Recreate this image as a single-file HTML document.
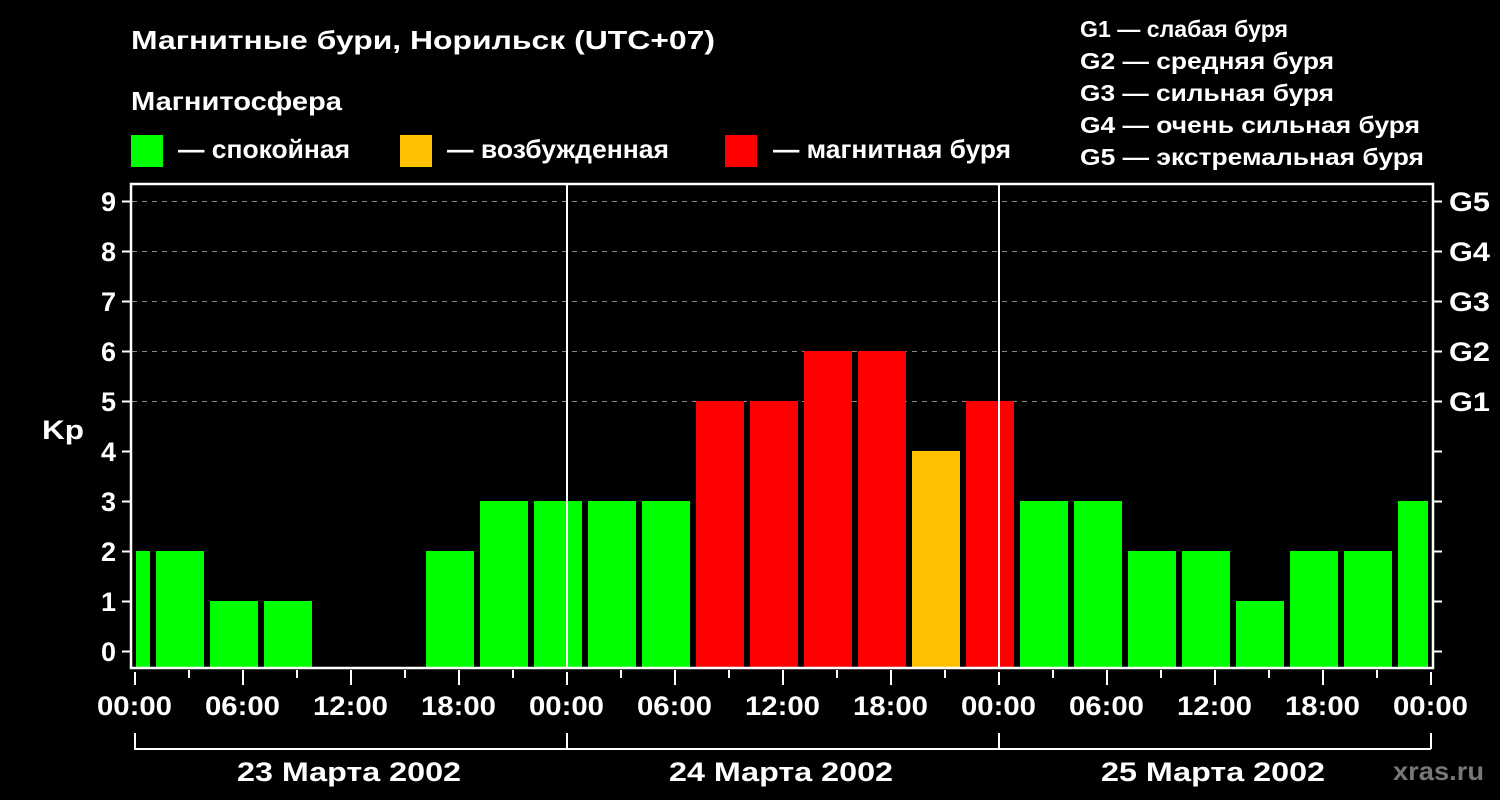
<!DOCTYPE html>
<html><head><meta charset="utf-8"><style>
html,body{margin:0;padding:0;background:#000;}
svg{display:block;font-family:"Liberation Sans",sans-serif;font-weight:bold;}
</style></head><body>
<svg width="1500" height="800" viewBox="0 0 1500 800" xmlns="http://www.w3.org/2000/svg">
<rect width="1500" height="800" fill="#000"/>
<g fill="#fff" font-size="26">
<text x="131" y="49" textLength="584" lengthAdjust="spacingAndGlyphs">Магнитные бури, Норильск (UTC+07)</text>
<text x="131" y="110" textLength="211" lengthAdjust="spacingAndGlyphs">Магнитосфера</text>
<text x="178" y="158" textLength="172" lengthAdjust="spacingAndGlyphs">— спокойная</text>
<text x="447" y="158" textLength="222" lengthAdjust="spacingAndGlyphs">— возбужденная</text>
<text x="773" y="158" textLength="238" lengthAdjust="spacingAndGlyphs">— магнитная буря</text>
</g>
<rect x="131" y="135" width="32" height="32" fill="#00ff00"/>
<rect x="400" y="135" width="32" height="32" fill="#ffc000"/>
<rect x="725" y="135" width="32" height="32" fill="#ff0000"/>
<g fill="#fff" font-size="23" lengthAdjust="spacingAndGlyphs">
<text x="1080" y="37" textLength="208" lengthAdjust="spacingAndGlyphs">G1 — слабая буря</text>
<text x="1080" y="69" textLength="254" lengthAdjust="spacingAndGlyphs">G2 — средняя буря</text>
<text x="1080" y="101" textLength="254" lengthAdjust="spacingAndGlyphs">G3 — сильная буря</text>
<text x="1080" y="133" textLength="340" lengthAdjust="spacingAndGlyphs">G4 — очень сильная буря</text>
<text x="1080" y="165" textLength="344" lengthAdjust="spacingAndGlyphs">G5 — экстремальная буря</text>
</g>
<g stroke="#888" stroke-width="1" stroke-dasharray="5,5">
<line x1="132" y1="201.5" x2="1432" y2="201.5"/>
<line x1="132" y1="251.5" x2="1432" y2="251.5"/>
<line x1="132" y1="301.5" x2="1432" y2="301.5"/>
<line x1="132" y1="351.5" x2="1432" y2="351.5"/>
<line x1="132" y1="401.5" x2="1432" y2="401.5"/>
</g>
<g>
<rect x="136" y="551" width="14" height="117" fill="#00ff00"/>
<rect x="156" y="551" width="48" height="117" fill="#00ff00"/>
<rect x="210" y="601" width="48" height="67" fill="#00ff00"/>
<rect x="264" y="601" width="48" height="67" fill="#00ff00"/>
<rect x="426" y="551" width="48" height="117" fill="#00ff00"/>
<rect x="480" y="501" width="48" height="167" fill="#00ff00"/>
<rect x="534" y="501" width="48" height="167" fill="#00ff00"/>
<rect x="588" y="501" width="48" height="167" fill="#00ff00"/>
<rect x="642" y="501" width="48" height="167" fill="#00ff00"/>
<rect x="696" y="401" width="48" height="267" fill="#ff0000"/>
<rect x="750" y="401" width="48" height="267" fill="#ff0000"/>
<rect x="804" y="351" width="48" height="317" fill="#ff0000"/>
<rect x="858" y="351" width="48" height="317" fill="#ff0000"/>
<rect x="912" y="451" width="48" height="217" fill="#ffc000"/>
<rect x="966" y="401" width="48" height="267" fill="#ff0000"/>
<rect x="1020" y="501" width="48" height="167" fill="#00ff00"/>
<rect x="1074" y="501" width="48" height="167" fill="#00ff00"/>
<rect x="1128" y="551" width="48" height="117" fill="#00ff00"/>
<rect x="1182" y="551" width="48" height="117" fill="#00ff00"/>
<rect x="1236" y="601" width="48" height="67" fill="#00ff00"/>
<rect x="1290" y="551" width="48" height="117" fill="#00ff00"/>
<rect x="1344" y="551" width="48" height="117" fill="#00ff00"/>
<rect x="1398" y="501" width="30" height="167" fill="#00ff00"/>
</g>
<g stroke="#fff" stroke-width="2">
<line x1="567" y1="183" x2="567" y2="668"/>
<line x1="999" y1="183" x2="999" y2="668"/>
</g>
<rect x="131" y="184" width="1302" height="484" fill="none" stroke="#fff" stroke-width="2.5"/>
<g stroke="#fff" stroke-width="2">
<path d="M122 201.5H131M122 251.5H131M122 301.5H131M122 351.5H131M122 401.5H131M122 451.5H131M122 501.5H131M122 551.5H131M122 601.5H131M122 651.5H131"/>
<path d="M1433 201.5H1442M1433 251.5H1442M1433 301.5H1442M1433 351.5H1442M1433 401.5H1442M1433 451.5H1442M1433 501.5H1442M1433 551.5H1442M1433 601.5H1442M1433 651.5H1442"/>
</g>
<g fill="#fff" font-size="27" text-anchor="end">
<text x="116" y="211">9</text><text x="116" y="261">8</text><text x="116" y="311">7</text>
<text x="116" y="361">6</text><text x="116" y="411">5</text><text x="116" y="461">4</text>
<text x="116" y="511">3</text><text x="116" y="561">2</text><text x="116" y="611">1</text>
<text x="116" y="661">0</text>
</g>
<text x="42" y="439" fill="#fff" font-size="27" textLength="42" lengthAdjust="spacingAndGlyphs">Kp</text>
<g fill="#fff" font-size="27">
<text x="1449" y="211" textLength="41" lengthAdjust="spacingAndGlyphs">G5</text>
<text x="1449" y="261" textLength="41" lengthAdjust="spacingAndGlyphs">G4</text>
<text x="1449" y="311" textLength="41" lengthAdjust="spacingAndGlyphs">G3</text>
<text x="1449" y="361" textLength="41" lengthAdjust="spacingAndGlyphs">G2</text>
<text x="1449" y="411" textLength="41" lengthAdjust="spacingAndGlyphs">G1</text>
</g>
<g stroke="#fff" stroke-width="2">
<path d="M135 672V685M567 672V685M999 672V685M1431 672V685"/>
<path d="M243 670V685M351 670V685M459 670V685M675 670V685M783 670V685M891 670V685M1107 670V685M1215 670V685M1323 670V685"/>
<path d="M189 670V678M297 670V678M405 670V678M513 670V678M621 670V678M729 670V678M837 670V678M945 670V678M1053 670V678M1161 670V678M1269 670V678M1377 670V678"/>
<path d="M135 733V749H1431M567 733V749M999 733V749M1431 733V749"/>
</g>
<g fill="#fff" font-size="27">
<text x="97" y="715" textLength="75" lengthAdjust="spacingAndGlyphs">00:00</text>
<text x="205" y="715" textLength="75" lengthAdjust="spacingAndGlyphs">06:00</text>
<text x="313" y="715" textLength="75" lengthAdjust="spacingAndGlyphs">12:00</text>
<text x="421" y="715" textLength="75" lengthAdjust="spacingAndGlyphs">18:00</text>
<text x="529" y="715" textLength="75" lengthAdjust="spacingAndGlyphs">00:00</text>
<text x="637" y="715" textLength="75" lengthAdjust="spacingAndGlyphs">06:00</text>
<text x="745" y="715" textLength="75" lengthAdjust="spacingAndGlyphs">12:00</text>
<text x="853" y="715" textLength="75" lengthAdjust="spacingAndGlyphs">18:00</text>
<text x="961" y="715" textLength="75" lengthAdjust="spacingAndGlyphs">00:00</text>
<text x="1069" y="715" textLength="75" lengthAdjust="spacingAndGlyphs">06:00</text>
<text x="1177" y="715" textLength="75" lengthAdjust="spacingAndGlyphs">12:00</text>
<text x="1285" y="715" textLength="75" lengthAdjust="spacingAndGlyphs">18:00</text>
<text x="1393" y="715" textLength="75" lengthAdjust="spacingAndGlyphs">00:00</text>
<text x="237" y="781" textLength="224" lengthAdjust="spacingAndGlyphs">23 Марта 2002</text>
<text x="669" y="781" textLength="224" lengthAdjust="spacingAndGlyphs">24 Марта 2002</text>
<text x="1101" y="781" textLength="224" lengthAdjust="spacingAndGlyphs">25 Марта 2002</text>
</g>
<text x="1393" y="780" fill="#777" font-size="26" textLength="91" lengthAdjust="spacingAndGlyphs">xras.ru</text>
</svg>
</body></html>
